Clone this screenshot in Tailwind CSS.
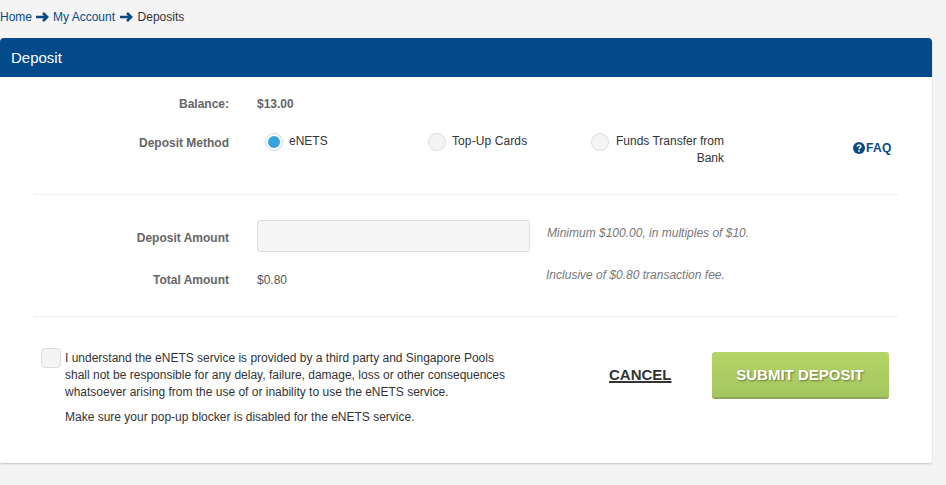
<!DOCTYPE html>
<html lang="en">
<head>
  <meta charset="UTF-8" />
  <title>Deposit</title>
  <script src="https://cdn.jsdelivr.net/npm/@tailwindcss/browser@4"></script>
</head>
<body class="h-[485px] overflow-hidden bg-[#f4f4f4] font-['Liberation_Sans',Arial,sans-serif] text-xs text-[#333]">
  <nav class="flex h-[38px] items-start pt-[10px] leading-[14px]">
    <a class="text-[#0a4a82]">Home</a>
    <svg class="mx-[4px] mt-[2px] h-[10px] w-[13px]" viewBox="0 0 13 10"><path d="M0 5h10.5M7 1l4.2 4-4.2 4" fill="none" stroke="#0a4a82" stroke-width="2.6"/></svg>
    <a class="text-[#0a4a82]">My Account</a>
    <svg class="mx-[5px] mt-[2px] h-[10px] w-[13px]" viewBox="0 0 13 10"><path d="M0 5h10.5M7 1l4.2 4-4.2 4" fill="none" stroke="#0a4a82" stroke-width="2.6"/></svg>
    <span class="-ml-[0.5px]">Deposits</span>
  </nav>

  <main class="h-[425px] w-[932px] rounded-t-[4px] rounded-b-[2px] bg-white shadow-[0_1px_2px_rgba(0,0,0,0.2)]">
    <h1 class="flex h-[39px] items-center rounded-t-[4px] bg-[#034a8a] pl-[11px] text-[15px] text-white">Deposit</h1>

    <div class="mx-[34px] w-[863px]">
      <div class="flex h-[118px] flex-col border-b border-dotted border-[#e2e2e2]">
        <div class="mt-[20px] flex h-[14px] items-center font-bold text-[#666]">
          <span class="w-[195px] text-right">Balance:</span>
          <span class="ml-[28px]">$13.00</span>
        </div>
        <div class="mt-[22px] flex items-start">
          <span class="mt-[2px] w-[195px] text-right font-bold text-[#666]">Deposit Method</span>
          <div class="ml-[36px] flex w-[163px] items-start">
            <span class="flex h-[18px] w-[18px] items-center justify-center rounded-full border border-[#ccd9e0] bg-white"><span class="h-[12px] w-[12px] rounded-full bg-[#36a3dc]"></span></span>
            <span class="ml-[6px]">eNETS</span>
          </div>
          <div class="flex w-[163px] items-start">
            <span class="h-[18px] w-[18px] rounded-full border border-[#ddd] bg-[#f4f4f4]"></span>
            <span class="ml-[6px] tracking-[0.1px]">Top-Up Cards</span>
          </div>
          <div class="flex items-start">
            <span class="h-[18px] w-[18px] rounded-full border border-[#ddd] bg-[#f4f4f4]"></span>
            <span class="ml-[6px] w-[109px] text-right leading-[17px]">Funds Transfer from Bank</span>
          </div>
          <a class="ml-[129px] mt-[7px] flex items-center gap-[1px] font-bold tracking-[0.3px] text-[#0a4a82]">
            <svg class="h-[12px] w-[12px]" viewBox="0 0 12 12"><circle cx="6" cy="6" r="6" fill="#0a4a82"/><path d="M4.2 4.6C4.3 2.6 7.8 2.6 7.8 4.5 7.8 5.8 6 5.8 6 7.2" fill="none" stroke="#fff" stroke-width="1.5"/><rect x="5.2" y="8.2" width="1.6" height="1.6" fill="#fff"/></svg>
            FAQ
          </a>
        </div>
      </div>

      <div class="h-[122px] border-b border-dotted border-[#e2e2e2] pt-[25px]">
        <div class="flex items-start">
          <span class="mt-[10px] w-[195px] text-right font-bold text-[#666]">Deposit Amount</span>
          <input class="ml-[28px] h-[32px] w-[273px] rounded-[3px] border border-[#ddd] bg-[#f5f5f5]" />
          <em class="ml-[17px] mt-[5px] text-[#777]">Minimum $100.00, in multiples of $10.</em>
        </div>
        <div class="mt-[20px] flex items-start">
          <span class="w-[195px] text-right font-bold text-[#666]">Total Amount</span>
          <span class="ml-[28px] text-[#555]">$0.80</span>
          <em class="ml-[259px] -mt-[5px] text-[#777]">Inclusive of $0.80 transaction fee.</em>
        </div>
      </div>

      <div class="flex pt-[33px]">
        <span class="-mt-[2px] ml-[7px] h-[20px] w-[20px] rounded-[4px] border border-[#ddd] bg-[#f4f4f4]"></span>
        <div class="ml-[4px] w-[450px] leading-[17px]">
          <p>I understand the eNETS service is provided by a third party and Singapore Pools shall not be responsible for any delay, failure, damage, loss or other consequences whatsoever arising from the use of or inability to use the eNETS service.</p>
          <p class="mt-[8px]">Make sure your pop-up blocker is disabled for the eNETS service.</p>
        </div>
        <a class="ml-[94px] mt-[15px] self-start text-[15px] font-bold text-[#333] underline decoration-2">CANCEL</a>
        <button class="ml-[40px] mt-[2px] h-[47px] w-[177px] self-start rounded-[3px] border-b-2 border-[#8fa95a] bg-gradient-to-b from-[#b5d568] to-[#a5c55f] text-[15px] font-bold text-white [text-shadow:1px_1px_2px_rgba(0,0,0,0.4)]">SUBMIT DEPOSIT</button>
      </div>
    </div>
  </main>
</body>
</html>
